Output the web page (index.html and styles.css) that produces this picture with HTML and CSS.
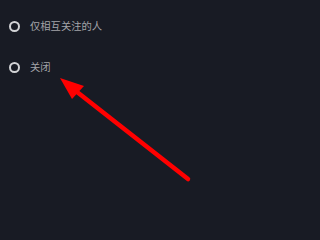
FILE: index.html
```html
<!DOCTYPE html>
<html>
<head>
<meta charset="utf-8">
<link rel="stylesheet" href="styles.css">
</head>
<body>
<div class="screen">
  <ul class="options">
    <li class="option"><span class="radio"></span><span class="label">仅相互关注的人</span></li>
    <li class="option"><span class="radio"></span><span class="label">关闭</span></li>
  </ul>
  <svg class="arrow" width="320" height="239" viewBox="0 0 320 239">
    <line x1="188" y1="179" x2="72" y2="88" stroke="#ff0000" stroke-width="4.5" stroke-linecap="round"/>
    <polygon points="60,78 84,86 72,99" fill="#ff0000"/>
  </svg>
</div>
</body>
</html>
```
FILE: styles.css
```css
html, body {
  margin: 0;
  padding: 0;
  background: #181b24;
}
.screen {
  position: relative;
  width: 320px;
  height: 239px;
  overflow: hidden;
  background: #181b24;
  font-family: "Noto Sans CJK SC", "Noto Sans", sans-serif;
}
.options {
  list-style: none;
  margin: 0;
  padding: 15px 0 0 9px;
  display: flex;
  flex-direction: column;
  gap: 19px;
}
.option {
  display: flex;
  align-items: center;
  height: 22px;
}
.radio {
  box-sizing: border-box;
  width: 11px;
  height: 11px;
  border: 2px solid #d2d3d6;
  border-radius: 50%;
  margin-right: 10px;
  flex: none;
}
.label {
  color: #a3a4a8;
  font-size: 10.3px;
  line-height: 22px;
}
.arrow {
  position: absolute;
  left: 0;
  top: 0;
}
```
